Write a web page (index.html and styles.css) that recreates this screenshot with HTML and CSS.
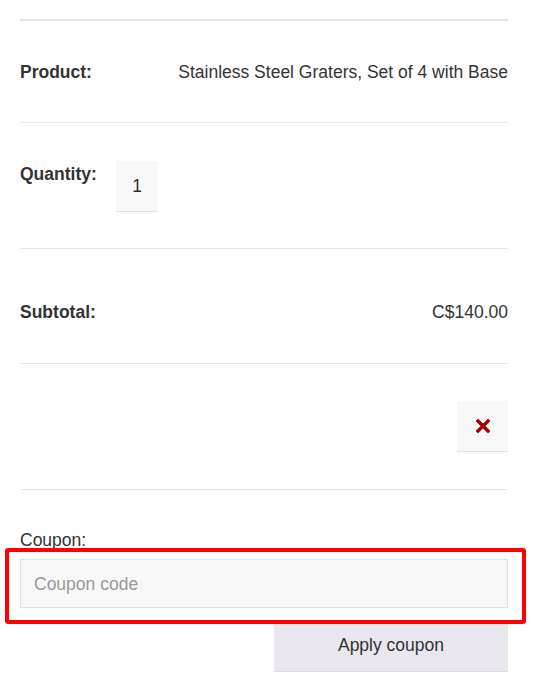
FILE: index.html
```html
<!DOCTYPE html>
<html lang="en">
<head>
<meta charset="utf-8">
<title>Cart</title>
<link rel="stylesheet" href="styles.css">
</head>
<body>
<div class="cart">
  <div class="head"></div>
  <div class="row row-product">
    <span class="label">Product:</span>
    <span class="value">Stainless Steel Graters, Set of 4 with Base</span>
  </div>
  <div class="row row-qty">
    <span class="label label-qty">Quantity:</span>
    <div class="qty">1</div>
  </div>
  <div class="row row-subtotal">
    <span class="label">Subtotal:</span>
    <span class="value">C$140.00</span>
  </div>
  <div class="row row-remove">
    <button class="remove" aria-label="Remove this item">
      <svg width="14" height="14" viewBox="0 0 14 14"><path d="M2 2L12 12M12 2L2 12" stroke="#a30000" stroke-width="3.4" stroke-linecap="square"/></svg>
    </button>
  </div>
  <div class="coupon">
    <label class="coupon-label" for="coupon">Coupon:</label>
    <input id="coupon" class="coupon-input" type="text" placeholder="Coupon code">
    <div class="highlight"></div>
    <div class="actions"><button class="apply">Apply coupon</button></div>
  </div>
</div>
</body>
</html>
```
FILE: styles.css
```css
* { box-sizing: border-box; }
html, body { margin: 0; background: #fff; }
body {
  font-family: "Liberation Sans", Arial, sans-serif;
  font-size: 17.5px;
  line-height: 24px;
  color: #333;
}
.cart {
  width: 488px;
  margin-left: 20px;
}
.head {
  height: 21px;
  border-bottom: 2px solid #e6e6e6;
}
.row {
  display: flex;
  justify-content: space-between;
  align-items: flex-start;
  border-bottom: 1px solid #e6e6e6;
}
.label { font-weight: bold; }
.row-product { padding: 39px 0 38px; }
.row-qty {
  justify-content: flex-start;
  padding: 38px 0 36px;
}
.label-qty { width: 96px; margin-top: 1px; }
.qty {
  width: 42px;
  height: 51px;
  background: #f8f8f8;
  border-bottom: 1px solid #e3e3e3;
  display: flex;
  align-items: center;
  justify-content: center;
}
.row-subtotal { padding: 51px 0 39px; }
.row-remove {
  justify-content: flex-end;
  padding: 37px 0 37px;
}
.remove {
  width: 51px;
  height: 51px;
  border: 0;
  border-bottom: 1px solid #e3e3e3;
  background: #f8f8f8;
  padding: 0;
  display: flex;
  align-items: center;
  justify-content: center;
}
.coupon {
  position: relative;
  padding-top: 38px;
}
.coupon-label { display: block; }
.coupon-input {
  display: block;
  width: 488px;
  height: 49px;
  margin-top: 7px;
  border: 1px solid #e0e0e0;
  background: #f8f8f8;
  padding: 1px 13px 0;
  font-family: inherit;
  font-size: 17.5px;
  color: #333;
}
.coupon-input::placeholder { color: #999; }
.highlight {
  position: absolute;
  left: -15px;
  top: 58px;
  width: 521px;
  height: 76px;
  border: 4px solid #ff0000;
  border-radius: 3px;
  pointer-events: none;
}
.actions {
  display: flex;
  justify-content: flex-end;
  margin-top: 12px;
}
.apply {
  width: 234px;
  height: 52px;
  border: 0;
  border-bottom: 1px solid #dcd9e0;
  background: #e9e6ed;
  font-family: inherit;
  font-size: 17.5px;
  color: #333;
  padding: 0;
}
```
